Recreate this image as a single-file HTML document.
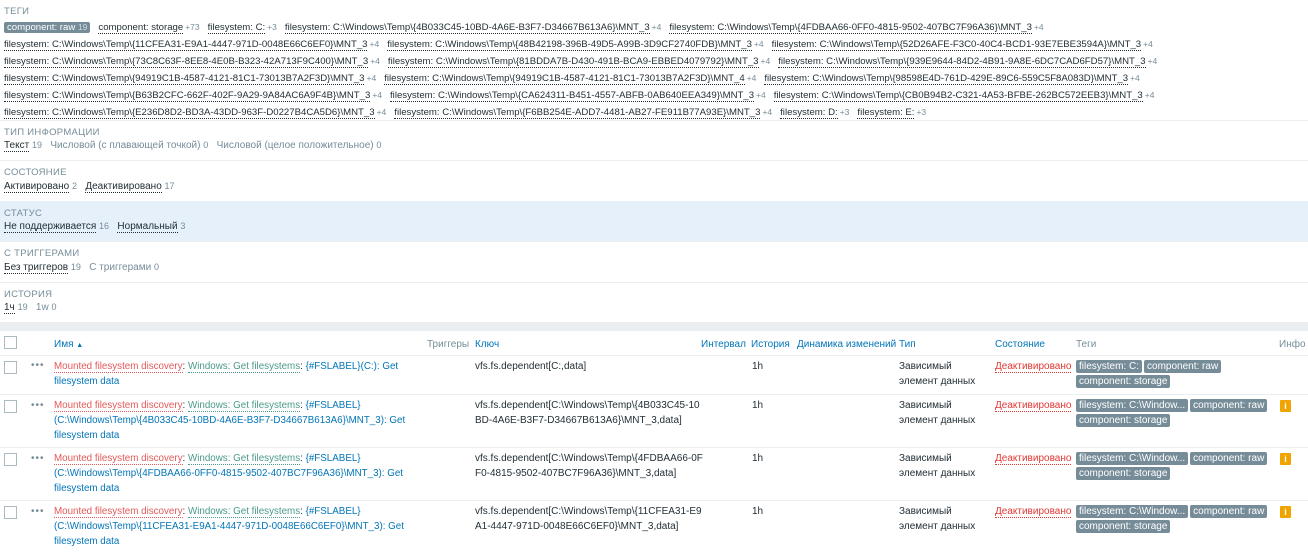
<!DOCTYPE html>
<html><head><meta charset="utf-8"><style>
*{margin:0;padding:0;box-sizing:border-box}
body{width:1308px;height:554px;overflow:hidden;background:#fff;font-family:"Liberation Sans",Arial,sans-serif;font-size:10px;color:#1f2c33;position:relative}
.a{position:absolute;white-space:nowrap}
.h{color:#768d99;font-size:9.5px;letter-spacing:.3px}
.u{border-bottom:1px dotted #1f2c33}
.g{color:#768d99}
.n{color:#768d99;font-size:9px}
.tl{font-size:9.6px}
.tl span.t{border-bottom:1px dotted #1f2c33;margin-right:2px}
.tl .n{margin-right:8px;font-size:8.5px}
.sel{background:#768d99;color:#fff;padding:0 3px;border-radius:2px}
.sep{position:absolute;left:0;width:1308px;height:1px;background:#ebeef0}
.ch{position:absolute;left:4px;width:13px;height:13px;border:1px solid #acbbc2;background:#fff}
.dots{position:absolute;left:31px;color:#768d99;font-size:10px;letter-spacing:1px}
.or{color:#e45959;border-bottom:1px dotted #e45959}
.gr{color:#4b9a8a;border-bottom:1px dotted #4b9a8a}
.bl{color:#0275b8}
.tag{display:inline-block;background:#768d99;color:#fff;padding:0 3px;border-radius:2px;line-height:13px;margin:0 2px 2px 0}
.red{color:#e33734;border-bottom:1px dotted #e33734}
.th{position:absolute;top:339px;color:#0275b8}
.info{position:absolute;left:1280px;width:11px;height:12px;background:#f0a400;color:#fff;font-weight:bold;text-align:center;font-size:9px;line-height:12px;border-radius:1px}
.cell{position:absolute;line-height:15px;white-space:nowrap}
.nm{font-size:9.8px}
</style></head><body>
<div class="a h" style="left:4px;top:6px">ТЕГИ</div>
<div class="a tl" style="left:4px;top:19px;line-height:16px">
<span class="sel">component: raw <span style="color:#d0dbe0;font-size:8.5px">19</span></span>&nbsp;&nbsp; <span class="t">component: storage</span><span class="n">+73</span><span class="t">filesystem: C:</span><span class="n">+3</span><span class="t">filesystem: C:\Windows\Temp\{4B033C45-10BD-4A6E-B3F7-D34667B613A6}\MNT_3</span><span class="n">+4</span><span class="t">filesystem: C:\Windows\Temp\{4FDBAA66-0FF0-4815-9502-407BC7F96A36}\MNT_3</span><span class="n">+4</span><br>
<span class="t">filesystem: C:\Windows\Temp\{11CFEA31-E9A1-4447-971D-0048E66C6EF0}\MNT_3</span><span class="n">+4</span><span class="t">filesystem: C:\Windows\Temp\{48B42198-396B-49D5-A99B-3D9CF2740FDB}\MNT_3</span><span class="n">+4</span><span class="t">filesystem: C:\Windows\Temp\{52D26AFE-F3C0-40C4-BCD1-93E7EBE3594A}\MNT_3</span><span class="n">+4</span><br>
<span class="t">filesystem: C:\Windows\Temp\{73C8C63F-8EE8-4E0B-B323-42A713F9C400}\MNT_3</span><span class="n">+4</span><span class="t">filesystem: C:\Windows\Temp\{81BDDA7B-D430-491B-BCA9-EBBED4079792}\MNT_3</span><span class="n">+4</span><span class="t">filesystem: C:\Windows\Temp\{939E9644-84D2-4B91-9A8E-6DC7CAD6FD57}\MNT_3</span><span class="n">+4</span><br>
<span class="t">filesystem: C:\Windows\Temp\{94919C1B-4587-4121-81C1-73013B7A2F3D}\MNT_3</span><span class="n">+4</span><span class="t">filesystem: C:\Windows\Temp\{94919C1B-4587-4121-81C1-73013B7A2F3D}\MNT_4</span><span class="n">+4</span><span class="t">filesystem: C:\Windows\Temp\{98598E4D-761D-429E-89C6-559C5F8A083D}\MNT_3</span><span class="n">+4</span><br>
<span class="t">filesystem: C:\Windows\Temp\{B63B2CFC-662F-402F-9A29-9A84AC6A9F4B}\MNT_3</span><span class="n">+4</span><span class="t">filesystem: C:\Windows\Temp\{CA624311-B451-4557-ABFB-0AB640EEA349}\MNT_3</span><span class="n">+4</span><span class="t">filesystem: C:\Windows\Temp\{CB0B94B2-C321-4A53-BFBE-262BC572EEB3}\MNT_3</span><span class="n">+4</span><br>
<span class="t">filesystem: C:\Windows\Temp\{E236D8D2-BD3A-43DD-963F-D0227B4CA5D6}\MNT_3</span><span class="n">+4</span><span class="t">filesystem: C:\Windows\Temp\{F6BB254E-ADD7-4481-AB27-FE911B77A93E}\MNT_3</span><span class="n">+4</span><span class="t">filesystem: D:</span><span class="n">+3</span><span class="t">filesystem: E:</span><span class="n">+3</span>
</div>
<div class="sep" style="top:120px"></div>
<div class="a h" style="left:4px;top:127px">ТИП ИНФОРМАЦИИ</div>
<div class="a" style="left:4px;top:140px"><span class="u">Текст</span> <span class="n">19</span>&nbsp;&nbsp; <span class="g">Числовой (с плавающей точкой)</span> <span class="n">0</span>&nbsp;&nbsp; <span class="g">Числовой (целое положительное)</span> <span class="n">0</span></div>
<div class="sep" style="top:160px"></div>
<div class="a h" style="left:4px;top:167px">СОСТОЯНИЕ</div>
<div class="a" style="left:4px;top:181px"><span class="u">Активировано</span> <span class="n">2</span>&nbsp;&nbsp; <span class="u">Деактивировано</span> <span class="n">17</span></div>
<div style="position:absolute;left:0;top:201px;width:1308px;height:40px;background:#e5f0fa"></div>
<div class="a h" style="left:4px;top:208px">СТАТУС</div>
<div class="a" style="left:4px;top:221px"><span class="u">Не поддерживается</span> <span class="n">16</span>&nbsp;&nbsp; <span class="u">Нормальный</span> <span class="n">3</span></div>
<div class="sep" style="top:241px"></div>
<div class="a h" style="left:4px;top:248px">С ТРИГГЕРАМИ</div>
<div class="a" style="left:4px;top:262px"><span class="u">Без триггеров</span> <span class="n">19</span>&nbsp;&nbsp; <span class="g">С триггерами</span> <span class="n">0</span></div>
<div class="sep" style="top:282px"></div>
<div class="a h" style="left:4px;top:289px">ИСТОРИЯ</div>
<div class="a" style="left:4px;top:302px"><span class="u">1ч</span> <span class="n">19</span>&nbsp;&nbsp; <span class="g">1w</span> <span class="n">0</span></div>
<div style="position:absolute;left:0;top:322px;width:1308px;height:9px;background:#ebeef0"></div>

<div class="ch" style="top:336px"></div>
<div class="th" style="left:54px">Имя <span style="font-size:7px">▲</span></div>
<div class="th" style="left:427px;color:#768d99">Триггеры</div>
<div class="th" style="left:475px">Ключ</div>
<div class="th" style="left:701px">Интервал</div>
<div class="th" style="left:751px">История</div>
<div class="th" style="left:797px">Динамика изменений</div>
<div class="th" style="left:899px">Тип</div>
<div class="th" style="left:995px">Состояние</div>
<div class="th" style="left:1076px;color:#768d99">Теги</div>
<div class="th" style="left:1279px;color:#768d99">Инфо</div>
<div class="sep" style="top:355px"></div>

<div class="ch" style="top:361px"></div><div class="dots" style="top:360px">•••</div>
<div class="cell nm" style="left:54px;top:359px"><span class="or">Mounted filesystem discovery</span>: <span class="gr">Windows: Get filesystems</span>: <span class="bl">{#FSLABEL}(C:): Get<br>filesystem data</span></div>
<div class="cell" style="left:475px;top:359px">vfs.fs.dependent[C:,data]</div>
<div class="cell" style="left:752px;top:359px">1h</div>
<div class="cell" style="left:899px;top:359px">Зависимый<br>элемент данных</div>
<div class="cell" style="left:995px;top:359px"><span class="red">Деактивировано</span></div>
<div class="cell" style="left:1076px;top:360px;line-height:13px"><span class="tag">filesystem: C:</span><span class="tag">component: raw</span><br><span class="tag">component: storage</span></div>
<div class="sep" style="top:394px"></div>

<div class="ch" style="top:400px"></div><div class="dots" style="top:400px">•••</div>
<div class="cell nm" style="left:54px;top:398px"><span class="or">Mounted filesystem discovery</span>: <span class="gr">Windows: Get filesystems</span>: <span class="bl">{#FSLABEL}<br>(C:\Windows\Temp\{4B033C45-10BD-4A6E-B3F7-D34667B613A6}\MNT_3): Get<br>filesystem data</span></div>
<div class="cell" style="left:475px;top:398px">vfs.fs.dependent[C:\Windows\Temp\{4B033C45-10<br>BD-4A6E-B3F7-D34667B613A6}\MNT_3,data]</div>
<div class="cell" style="left:752px;top:398px">1h</div>
<div class="cell" style="left:899px;top:398px">Зависимый<br>элемент данных</div>
<div class="cell" style="left:995px;top:398px"><span class="red">Деактивировано</span></div>
<div class="cell" style="left:1076px;top:399px;line-height:13px"><span class="tag">filesystem: C:\Window...</span><span class="tag">component: raw</span><br><span class="tag">component: storage</span></div>
<div class="info" style="top:400px">i</div>
<div class="sep" style="top:447px"></div>

<div class="ch" style="top:453px"></div><div class="dots" style="top:453px">•••</div>
<div class="cell nm" style="left:54px;top:451px"><span class="or">Mounted filesystem discovery</span>: <span class="gr">Windows: Get filesystems</span>: <span class="bl">{#FSLABEL}<br>(C:\Windows\Temp\{4FDBAA66-0FF0-4815-9502-407BC7F96A36}\MNT_3): Get<br>filesystem data</span></div>
<div class="cell" style="left:475px;top:451px">vfs.fs.dependent[C:\Windows\Temp\{4FDBAA66-0F<br>F0-4815-9502-407BC7F96A36}\MNT_3,data]</div>
<div class="cell" style="left:752px;top:451px">1h</div>
<div class="cell" style="left:899px;top:451px">Зависимый<br>элемент данных</div>
<div class="cell" style="left:995px;top:451px"><span class="red">Деактивировано</span></div>
<div class="cell" style="left:1076px;top:452px;line-height:13px"><span class="tag">filesystem: C:\Window...</span><span class="tag">component: raw</span><br><span class="tag">component: storage</span></div>
<div class="info" style="top:453px">i</div>
<div class="sep" style="top:500px"></div>

<div class="ch" style="top:506px"></div><div class="dots" style="top:506px">•••</div>
<div class="cell nm" style="left:54px;top:504px"><span class="or">Mounted filesystem discovery</span>: <span class="gr">Windows: Get filesystems</span>: <span class="bl">{#FSLABEL}<br>(C:\Windows\Temp\{11CFEA31-E9A1-4447-971D-0048E66C6EF0}\MNT_3): Get<br>filesystem data</span></div>
<div class="cell" style="left:475px;top:504px">vfs.fs.dependent[C:\Windows\Temp\{11CFEA31-E9<br>A1-4447-971D-0048E66C6EF0}\MNT_3,data]</div>
<div class="cell" style="left:752px;top:504px">1h</div>
<div class="cell" style="left:899px;top:504px">Зависимый<br>элемент данных</div>
<div class="cell" style="left:995px;top:504px"><span class="red">Деактивировано</span></div>
<div class="cell" style="left:1076px;top:505px;line-height:13px"><span class="tag">filesystem: C:\Window...</span><span class="tag">component: raw</span><br><span class="tag">component: storage</span></div>
<div class="info" style="top:506px">i</div>
</body></html>
